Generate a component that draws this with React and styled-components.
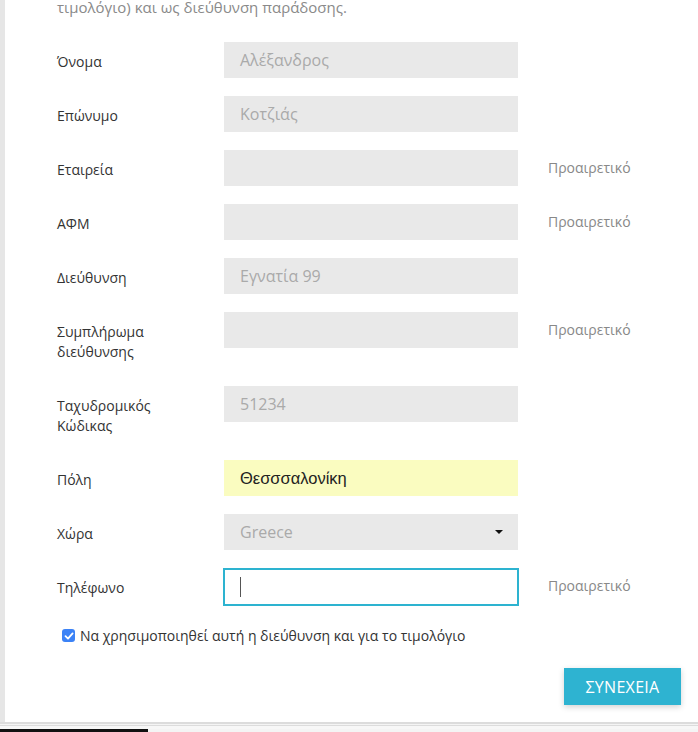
import styled, { createGlobalStyle } from 'styled-components'

//STYLES
const GlobalStyle = createGlobalStyle`
  html, body {
    margin: 0;
    padding: 0;
    background: #e6e6e6;
    font-family: "Open Sans", "Noto Sans", sans-serif;
    overflow: hidden;
  }
`

const Page = styled.div`
  width: 698px;
  height: 732px;
  display: flex;
  flex-direction: column;
  overflow: hidden;
`

const Panel = styled.div`
  margin-left: 5px;
  height: 722px;
  background: #fff;
  display: flex;
  flex-direction: column;
  padding-left: 52px;
  box-sizing: border-box;
`

const Intro = styled.p`
  margin: -4px 0 0;
  font-size: 15px;
  line-height: 22px;
  color: #8a8a8a;
`

const Form = styled.form`
  margin-top: 24px;
  display: flex;
  flex-direction: column;
  gap: 18px;
`

const Row = styled.div`
  display: grid;
  grid-template-columns: 167px 294px auto;
  align-items: start;
`

const Label = styled.label`
  font-size: 14px;
  line-height: 20px;
  color: #333;
  padding: 10px 0 6px;
  width: 120px;
`

const Field = styled.div`
  box-sizing: border-box;
  background: ${(p) => (p.$autofill ? '#fafcc0' : p.$focused ? '#fff' : '#e9e9e9')};
  border: ${(p) => (p.$focused ? '2px solid #2db3d0' : 'none')};
  margin: ${(p) => (p.$focused ? '0 -1px 0 -1px' : '0')};
  height: ${(p) => (p.$focused ? '38px' : '36px')};
  display: flex;
  align-items: center;
  padding: 0 ${(p) => (p.$focused ? '15px' : '16px')};
  font-size: ${(p) => (p.$autofill ? '16.5px' : '16px')};
  color: ${(p) => (p.$autofill ? '#222' : '#aaa')};
  font-family: ${(p) => (p.$autofill ? '"Liberation Sans", Arial, sans-serif' : 'inherit')};
  justify-content: space-between;
`

const Caret = styled.span`
  width: 1px;
  height: 20px;
  background: #555;
`

const Arrow = styled.span`
  width: 0;
  height: 0;
  border-left: 4px solid transparent;
  border-right: 4px solid transparent;
  border-top: 4px solid #111;
  margin-right: -1px;
`

const Optional = styled.span`
  margin-left: 30px;
  font-size: 14px;
  line-height: 36px;
  color: #888;
`

const CheckRow = styled.label`
  margin: 20px 0 0 5px;
  display: flex;
  align-items: center;
  gap: 5px;
  font-size: 14px;
  color: #333;
`

const Box = styled.span`
  width: 13px;
  height: 13px;
  border-radius: 3px;
  background: #3b82f6;
  display: flex;
  align-items: center;
  justify-content: center;
`

const Actions = styled.div`
  margin-top: 23px;
  display: flex;
  justify-content: flex-end;
  padding-right: 17px;
`

const Button = styled.button`
  width: 117px;
  height: 37px;
  border: none;
  background: #2eb3d1;
  color: #fff;
  font-family: "Open Sans", sans-serif;
  font-size: 16px;
  letter-spacing: 0.3px;
  box-shadow: 0 2px 6px rgba(0, 0, 0, 0.18);
  cursor: pointer;
`

const Footer = styled.div`
  flex: 1;
  border-top: 2px solid #dcdcdc;
  background: #f4f4f4;
  display: flex;
  flex-direction: column;
  justify-content: flex-end;
`

const FooterLine = styled.div`
  border-top: 1px solid #dcdcdc;
  height: 3px;
  background: #f7f7f7;
`

const DarkBar = styled.div`
  width: 148px;
  height: 3px;
  background: #111;
`

const fields = [
  { label: 'Όνομα', value: 'Αλέξανδρος' },
  { label: 'Επώνυμο', value: 'Κοτζιάς' },
  { label: 'Εταιρεία', value: '', optional: true },
  { label: 'ΑΦΜ', value: '', optional: true },
  { label: 'Διεύθυνση', value: 'Εγνατία 99' },
  { label: 'Συμπλήρωμα διεύθυνσης', value: '', optional: true },
  { label: 'Ταχυδρομικός Κώδικας', value: '51234' },
  { label: 'Πόλη', value: 'Θεσσσαλονίκη', autofill: true },
  { label: 'Χώρα', value: 'Greece', select: true },
  { label: 'Τηλέφωνο', value: '', optional: true, focused: true },
]

//LOGIC
const App = () => {
  return (
    <Page>
      <GlobalStyle />
      <Panel>
        <Intro>τιμολόγιο) και ως διεύθυνση παράδοσης.</Intro>
        <Form onSubmit={(e) => e.preventDefault()}>
          {fields.map((f) => (
            <Row key={f.label}>
              <Label>{f.label}</Label>
              <Field $autofill={f.autofill} $focused={f.focused}>
                {f.focused ? <Caret /> : <span>{f.value}</span>}
                {f.select && <Arrow />}
              </Field>
              {f.optional && <Optional>Προαιρετικό</Optional>}
            </Row>
          ))}
        </Form>
        <CheckRow>
          <Box>
            <svg width="10" height="10" viewBox="0 0 10 10">
              <path d="M1.5 5.2 L4 7.6 L8.6 2.4" fill="none" stroke="#fff" strokeWidth="1.8" strokeLinecap="round" strokeLinejoin="round" />
            </svg>
          </Box>
          Να χρησιμοποιηθεί αυτή η διεύθυνση και για το τιμολόγιο
        </CheckRow>
        <Actions>
          <Button type="button">ΣΥΝΕΧΕΙΑ</Button>
        </Actions>
      </Panel>
      <Footer>
        <FooterLine />
        <DarkBar />
      </Footer>
    </Page>
  )
}

export default App
